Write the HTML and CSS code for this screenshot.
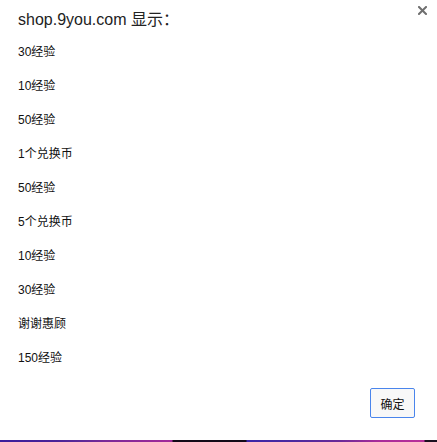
FILE: index.html
```
<!DOCTYPE html>
<html lang="zh-CN">
<head>
<meta charset="utf-8">
<title>shop.9you.com 显示</title>
<link rel="stylesheet" href="styles.css">
</head>
<body>
<div class="dialog">
  <div class="header">
    <div class="title">shop.9you.com 显示：</div>
    <button class="close" aria-label="关闭">
      <svg width="9" height="9" viewBox="0 0 9 9"><path d="M1 1L8 8M8 1L1 8" stroke="#6f6f6f" stroke-width="2" stroke-linecap="square"/></svg>
    </button>
  </div>
  <div class="message">30经验

10经验

50经验

1个兑换币

50经验

5个兑换币

10经验

30经验

谢谢惠顾

150经验</div>
  <div class="footer">
    <button class="ok">确定</button>
  </div>
  <div class="strip"></div>
</div>
</body>
</html>
```
FILE: styles.css
```
html, body {
  margin: 0;
  padding: 0;
  background: #fff;
}
.dialog {
  width: 437px;
  height: 442px;
  display: flex;
  flex-direction: column;
  font-family: "Liberation Sans", "Noto Sans CJK SC", sans-serif;
  color: #222;
}
.header {
  display: flex;
  justify-content: space-between;
  align-items: flex-start;
  padding: 0 10px 0 18px;
}
.title {
  margin-top: 10px;
  font-size: 16px;
  line-height: 20px;
  color: #222;
}
.close {
  margin-top: 6px;
  padding: 0;
  border: 0;
  background: none;
  width: 9px;
  height: 9px;
  display: flex;
}
.message {
  margin-top: 14px;
  padding-left: 18px;
  white-space: pre-line;
  font-size: 12px;
  line-height: 17px;
  color: #111;
}
.footer {
  display: flex;
  justify-content: flex-end;
  padding-right: 22px;
  margin-top: 21px;
}
.ok {
  width: 45px;
  height: 30px;
  border: 1px solid #4a85ec;
  border-radius: 2px;
  background: #f8f8f8;
  font-family: "Liberation Sans", "Noto Sans CJK SC", sans-serif;
  font-size: 12px;
  color: #111;
  padding: 0;
}
.strip {
  margin-top: auto;
  height: 2px;
  background: linear-gradient(to right,
    #3a1e9c 0px, #4a2398 57px, #5b2a98 80px, #7a2a98 105px, #a22a9a 172px,
    #120a18 173px, #120a18 246px,
    #3b26a8 247px, #4a2aa0 293px, #6a2a98 340px, #a82c9a 378px, #b8309a 424px,
    #1a1020 425px, #1a1020 437px);
}
```
